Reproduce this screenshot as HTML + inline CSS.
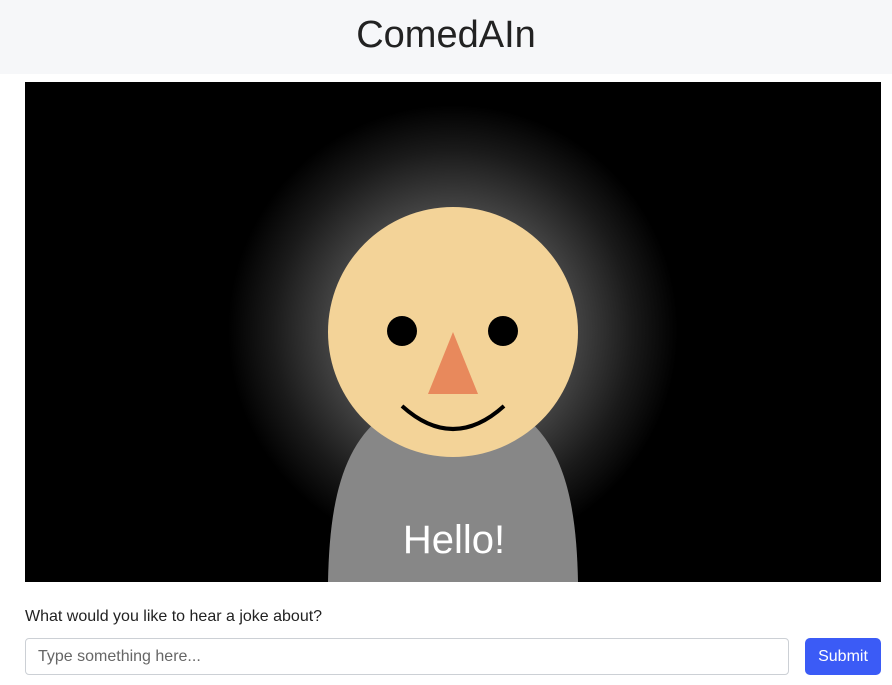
<!DOCTYPE html>
<html><head><meta charset="utf-8"><style>
body{margin:0;width:892px;height:685px;background:#fff;font-family:"Liberation Sans",sans-serif;position:relative;overflow:hidden}
.hdr{position:absolute;left:0;top:0;width:892px;height:74px;background:#f6f7f9;text-align:center;font-size:38px;line-height:70px;color:#222}
.stage{position:absolute;left:25px;top:82px;width:856px;height:500px;background:#000}
.lbl{position:absolute;left:25px;top:608px;font-size:16px;color:#222}
.inp{position:absolute;left:25px;top:638px;border:1px solid #ccd0d5;border-radius:4px;font-size:16px;color:#666;line-height:35px;padding-left:12px;box-sizing:border-box;width:764px;height:37px}
.btn{position:absolute;left:805px;top:638px;width:76px;height:37px;background:#3b5bf6;border-radius:5px;color:#fff;font-size:16px;text-align:center;line-height:37px}
</style></head><body>
<div class="hdr">ComedAIn</div>
<div class="stage">
<svg width="856" height="500" viewBox="25 82 856 500">
<defs><radialGradient id="g" cx="453" cy="330" r="225" gradientUnits="userSpaceOnUse">
<stop offset="0" stop-color="#999"/><stop offset="0.5" stop-color="#4a4a4a"/><stop offset="0.8" stop-color="#1a1a1a"/><stop offset="1" stop-color="#000"/></radialGradient></defs>
<rect x="25" y="82" width="856" height="500" fill="#000"/>
<circle cx="453" cy="330" r="225" fill="url(#g)"/>
<path d="M328 582 C330 480 350 400 453 392 C556 400 576 480 578 582 Z" fill="#878787"/>
<circle cx="453" cy="332" r="125" fill="#f3d398"/>
<circle cx="402" cy="331" r="15" fill="#000"/>
<circle cx="503" cy="331" r="15" fill="#000"/>
<polygon points="453,332 428,394 478,394" fill="#e8895c"/>
<path d="M402 406 Q453 452 504 406" stroke="#000" stroke-width="4" fill="none"/>
<text x="454" y="553" text-anchor="middle" font-size="40" fill="#fff" font-family="Liberation Sans">Hello!</text>
</svg>
</div>
<div class="lbl">What would you like to hear a joke about?</div>
<div class="inp">Type something here...</div>
<div class="btn">Submit</div>
</body></html>
